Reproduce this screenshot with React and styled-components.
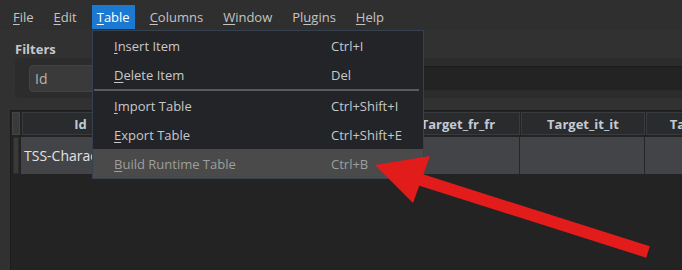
import React from 'react';
import styled, { createGlobalStyle } from 'styled-components';

const Global = createGlobalStyle`
  html, body { margin: 0; padding: 0; background: #303030; }
  body { font-family: "Open Sans", "Noto Sans", sans-serif; }
  * { box-sizing: border-box; }
`;

const Window = styled.div`
  position: relative;
  width: 682px;
  height: 270px;
  overflow: hidden;
  background: #313131;
  display: flex;
  flex-direction: column;
`;

const MenuBar = styled.div`
  height: 30px;
  flex: none;
  display: flex;
  align-items: flex-start;
  gap: 10px;
  padding: 5px 0 0 8px;
  background: #2f2f2f;
`;

const MenuTitle = styled.div`
  height: 24px;
  line-height: 24px;
  padding: 0 5px;
  font-size: 13px;
  color: ${p => (p.$active ? '#ffffff' : '#c4c4c4')};
  background: ${p => (p.$active ? '#1b79d2' : 'transparent')};
`;

const Mn = styled.span`
  text-decoration: underline;
  text-underline-offset: 2px;
  text-decoration-thickness: 1px;
`;

const Body = styled.div`
  flex: 1;
  display: flex;
  flex-direction: column;
  padding-top: 11px;
  min-height: 0;
`;

const SectionLabel = styled.div`
  margin-left: 15px;
  height: 17px;
  line-height: 17px;
  font-size: 13px;
  font-weight: 700;
  color: #c4c8cc;
`;

const FilterGroup = styled.div`
  margin: 0 -20px 0 15px;
  height: 40px;
  display: flex;
  align-items: center;
  padding-left: 14px;
  background: #2c2c2c;
  border-radius: 5px;
`;

const Combo = styled.div`
  width: 124px;
  height: 27px;
  line-height: 25px;
  padding-left: 5px;
  font-size: 14px;
  color: #b3b3b3;
  background: #3a3a3a;
  border: 1px solid #444;
  border-radius: 4px;
`;

const SearchField = styled.div`
  flex: 1;
  height: 25px;
  margin-left: 4px;
  background: #232323;
  border-top: 1px solid #1b1b1b;
  border-bottom: 1px solid #2a2a2a;
`;

const TableFrame = styled.div`
  flex: 1;
  margin: 12px -40px 0 10px;
  background: #232323;
  border-top: 1px solid #1c1c1c;
  border-left: 1px solid #1c1c1c;
  display: grid;
  grid-template-columns: 10px 118px 128px 128px 125px 125px 125px;
  grid-template-rows: 25px 38px;
  align-content: start;
`;

const Corner = styled.div`
  margin: 1px;
  background: #3a3a3a;
  border: 1px solid #444;
`;

const HeaderCell = styled.div`
  margin: 1px 0 1px 1px;
  background: #2a2b2d;
  border: 1px solid #3a3b3e;
  display: flex;
  align-items: center;
  justify-content: center;
  font-size: 13px;
  font-weight: 700;
  color: #c2cad6;
  white-space: nowrap;
  overflow: hidden;
`;

const RowHeader = styled.div`
  margin: 1px 2px 0 2px;
  background: #3a3a3a;
  border: 1px solid #2c2c2c;
`;

const DataCell = styled.div`
  background: #434447;
  border-right: 1px solid #262626;
  margin-top: 1px;
  display: flex;
  align-items: center;
  padding-left: 3px;
  font-size: 14px;
  color: #e2e2e2;
  white-space: nowrap;
  overflow: hidden;
`;

const Dropdown = styled.div`
  position: absolute;
  left: 92px;
  top: 30px;
  width: 332px;
  padding: 0;
  background: #232428;
  border: 1px solid #35414f;
  z-index: 5;
`;

const Item = styled.div`
  height: 29px;
  display: grid;
  grid-template-columns: 217px 1fr;
  align-items: center;
  padding-left: 21px;
  font-size: 13px;
  color: ${p => (p.$hover ? '#9e9e9e' : '#c8c8c8')};
  background: ${p => (p.$hover ? '#4a4a4a' : 'transparent')};
  white-space: nowrap;
`;

const Separator = styled.div`
  height: 2px;
  display: flex;
  align-items: center;
  padding: 0 4px 0 1px;
  &::before {
    content: '';
    flex: 1;
    height: 2px;
    background: #5a5a5a;
  }
`;

const ArrowLayer = styled.svg`
  position: absolute;
  left: 0;
  top: 0;
  width: 682px;
  height: 270px;
  pointer-events: none;
  z-index: 10;
`;

const menus = [
  { pre: '', mn: 'F', post: 'ile' },
  { pre: '', mn: 'E', post: 'dit' },
  { pre: '', mn: 'T', post: 'able', active: true },
  { pre: '', mn: 'C', post: 'olumns' },
  { pre: '', mn: 'W', post: 'indow' },
  { pre: 'Pl', mn: 'u', post: 'gins' },
  { pre: '', mn: 'H', post: 'elp' },
];

const items = [
  { mn: 'I', rest: 'nsert Item', key: 'Ctrl+I' },
  { mn: 'D', rest: 'elete Item', key: 'Del' },
  'sep',
  { mn: 'I', rest: 'mport Table', key: 'Ctrl+Shift+I' },
  { mn: 'E', rest: 'xport Table', key: 'Ctrl+Shift+E' },
  { mn: 'B', rest: 'uild Runtime Table', key: 'Ctrl+B', hover: true },
];

const columns = ['Id', '', '', 'Target_fr_fr', 'Target_it_it', 'Target_ja_jp'];

export default function App() {
  return (
    <Window>
      <Global />
      <MenuBar>
        {menus.map((m, i) => (
          <MenuTitle key={i} $active={m.active}>
            {m.pre}
            <Mn>{m.mn}</Mn>
            {m.post}
          </MenuTitle>
        ))}
      </MenuBar>
      <Body>
        <SectionLabel>Filters</SectionLabel>
        <FilterGroup>
          <Combo>Id</Combo>
          <SearchField />
        </FilterGroup>
        <TableFrame>
          <Corner />
          {columns.map((c, i) => (
            <HeaderCell key={i}>{c}</HeaderCell>
          ))}
          <RowHeader />
          <DataCell>TSS-Character_Name</DataCell>
          {columns.slice(1).map((c, i) => (
            <DataCell key={i} />
          ))}
        </TableFrame>
      </Body>
      <Dropdown>
        {items.map((it, i) =>
          it === 'sep' ? (
            <Separator key={i} />
          ) : (
            <Item key={i} $hover={it.hover}>
              <span>
                <Mn>{it.mn}</Mn>
                {it.rest}
              </span>
              <span>{it.key}</span>
            </Item>
          )
        )}
      </Dropdown>
      <ArrowLayer viewBox="0 0 682 270">
        <line x1="415" y1="178" x2="648" y2="252" stroke="#e21b1b" strokeWidth="12" />
        <polygon points="375,165 430,156 413,203" fill="#e21b1b" />
      </ArrowLayer>
    </Window>
  );
}
